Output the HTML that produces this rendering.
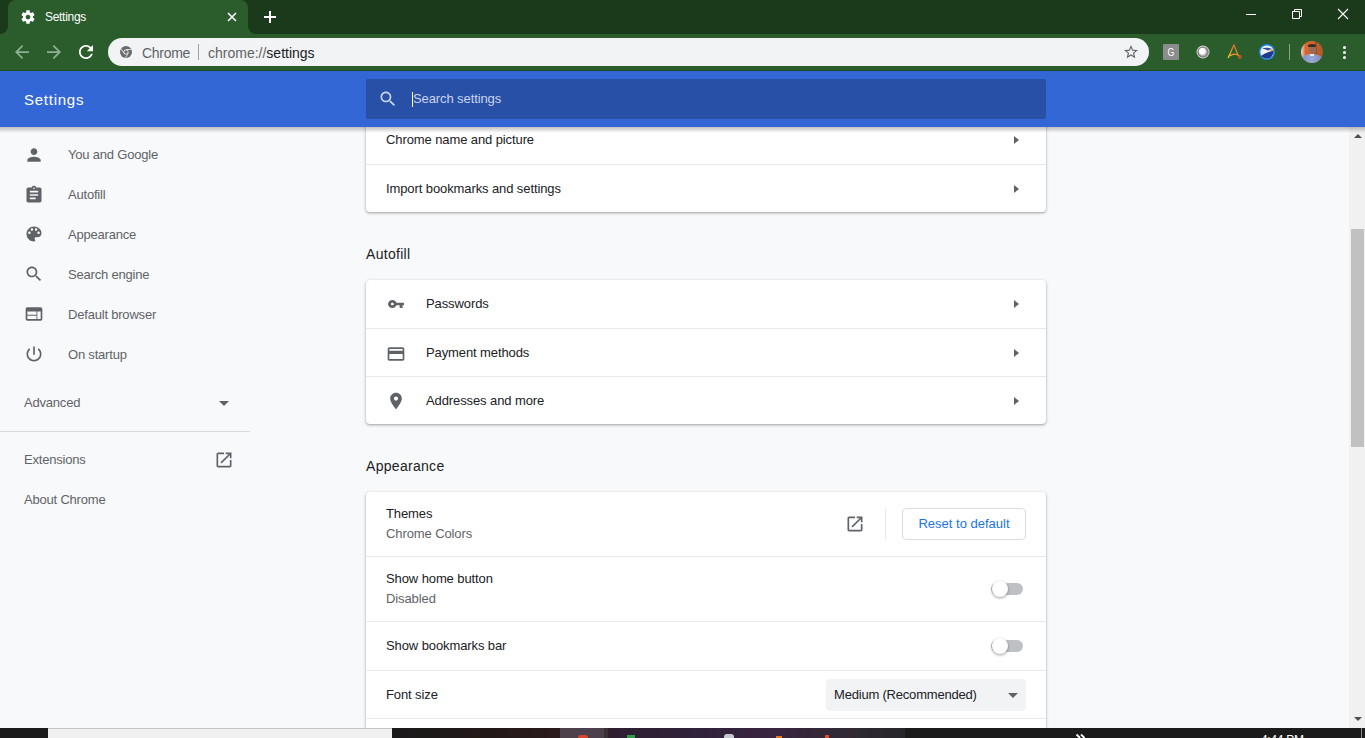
<!DOCTYPE html>
<html><head><meta charset="utf-8">
<style>
*{margin:0;padding:0;box-sizing:border-box}
html,body{width:1365px;height:738px;overflow:hidden;font-family:"Liberation Sans",sans-serif;background:#f8f9fa;position:relative}
.a{position:absolute}
svg{position:absolute;display:block}
.nav{position:absolute;left:68px;font-size:13px;letter-spacing:-0.2px;color:#5f6368;line-height:16px;white-space:nowrap;margin-top:1px}
.ico{fill:#5f6368}
.card{position:absolute;left:366px;width:680px;background:#fff;border-radius:4px;box-shadow:0 1px 2px 0 rgba(60,64,67,.3),0 1px 3px 1px rgba(60,64,67,.15)}
.sep{position:absolute;left:0;width:680px;height:1px;background:#e8eaed}
.lbl{position:absolute;font-size:13px;color:#202124;line-height:16px;white-space:nowrap;margin-top:1px;letter-spacing:-0.1px}
.sub{position:absolute;font-size:13px;color:#5f6368;line-height:16px;white-space:nowrap;margin-top:1px;letter-spacing:-0.1px}
.title{position:absolute;left:366px;font-size:14px;letter-spacing:0.3px;color:#202124;line-height:16px;margin-top:1px}
.arr{position:absolute;left:648px;width:0;height:0;border-top:4.5px solid transparent;border-bottom:4.5px solid transparent;border-left:5px solid #5f6368}
.toggle{position:absolute;left:625px;width:32px;height:12px}
.toggle .track{position:absolute;left:0;top:0;width:32px;height:12px;border-radius:6px;background:#bdc1c6}
.toggle .knob{position:absolute;left:0.5px;top:-2px;width:16px;height:16px;border-radius:50%;background:#fff;box-shadow:0 1px 3px 0 rgba(0,0,0,.4)}
</style></head><body>

<!-- ===== page content ===== -->
<div class="a" style="left:0;top:127px;width:1365px;height:601px;overflow:hidden">
 <div class="a" style="left:0;top:-127px;width:1365px;height:900px">
  <!-- sidebar -->
  <svg style="left:24px;top:145px" width="20" height="20" viewBox="0 0 24 24"><path class="ico" d="M12 12c2.21 0 4-1.79 4-4s-1.79-4-4-4-4 1.79-4 4 1.79 4 4 4zm0 2c-2.67 0-8 1.34-8 4v2h16v-2c0-2.66-5.33-4-8-4z"/></svg>
  <div class="nav" style="top:146px">You and Google</div>
  <svg style="left:24px;top:185px" width="20" height="20" viewBox="0 0 24 24"><path class="ico" d="M19 3h-4.18C14.4 1.84 13.3 1 12 1c-1.3 0-2.4.84-2.82 2H5c-1.1 0-2 .9-2 2v14c0 1.1.9 2 2 2h14c1.1 0 2-.9 2-2V5c0-1.1-.9-2-2-2zm-7 0c.55 0 1 .45 1 1s-.45 1-1 1-1-.45-1-1 .45-1 1-1zm2 14H7v-2h7v2zm3-4H7v-2h10v2zm0-4H7V7h10v2z"/></svg>
  <div class="nav" style="top:186px">Autofill</div>
  <svg style="left:24px;top:224px" width="20" height="20" viewBox="0 0 24 24"><path class="ico" d="M12 3c-4.97 0-9 4.03-9 9s4.030 9 9 9c.83 0 1.5-.67 1.5-1.5 0-.39-.15-.74-.39-1.01-.23-.26-.38-.61-.38-.99 0-.83.67-1.5 1.5-1.5H16c2.76 0 5-2.24 5-5 0-4.42-4.03-8-9-8zm-5.5 9c-.83 0-1.5-.67-1.5-1.5S5.670 9 6.5 9 8 9.67 8 10.5 7.33 12 6.5 12zm3-4C8.67 8 8 7.33 8 6.5S8.67 5 9.5 5s1.5.67 1.5 1.5S10.33 8 9.5 8zm5 0c-.83 0-1.5-.67-1.5-1.5S13.67 5 14.5 5s1.5.67 1.5 1.5S15.33 8 14.5 8zm3 4c-.83 0-1.5-.67-1.5-1.5S16.67 9 17.5 9s1.5.67 1.5 1.5-.67 1.5-1.5 1.5z"/></svg>
  <div class="nav" style="top:226px">Appearance</div>
  <svg style="left:24px;top:264px" width="20" height="20" viewBox="0 0 24 24"><path class="ico" d="M15.5 14h-.79l-.28-.27C15.41 12.59 16 11.11 16 9.5 16 5.91 13.09 3 9.5 3S3 5.91 3 9.5 5.91 16 9.5 16c1.61 0 3.090-.59 4.23-1.57l.27.28v.79l5 4.99L20.49 19l-4.99-5zm-6 0C7.01 14 5 11.99 5 9.5S7.01 5 9.5 5 14 7.01 14 9.5 11.99 14 9.5 14z"/></svg>
  <div class="nav" style="top:266px">Search engine</div>
  <svg style="left:24px;top:304px" width="20" height="20" viewBox="0 0 24 24"><path class="ico" d="M20 4H4c-1.1 0-1.99.9-1.99 2L2 18c0 1.1.9 2 2 2h16c1.1 0 2-.9 2-2V6c0-1.1-.9-2-2-2zm-5 14H4v-4h11v4zm0-5H4V9h11v4zm5 5h-4V9h4v9z"/></svg>
  <div class="nav" style="top:306px">Default browser</div>
  <svg style="left:24px;top:344px" width="20" height="20" viewBox="0 0 24 24"><path class="ico" d="M13 3h-2v10h2V3zm4.83 2.17l-1.42 1.42C17.99 7.86 19 9.81 19 12c0 3.87-3.13 7-7 7s-7-3.13-7-7c0-2.19 1.01-4.14 2.58-5.42L6.17 5.17C4.23 6.82 3 9.26 3 12c0 4.97 4.03 9 9 9s9-4.03 9-9c0-2.74-1.23-5.18-3.17-6.83z"/></svg>
  <div class="nav" style="top:346px">On startup</div>

  <div class="nav" style="left:24px;top:394px">Advanced</div>
  <div class="a" style="left:219px;top:400.5px;width:0;height:0;border-left:5px solid transparent;border-right:5px solid transparent;border-top:5px solid #5f6368"></div>
  <div class="a" style="left:0;top:431px;width:250px;height:1px;background:#dadce0"></div>
  <div class="nav" style="left:24px;top:451px">Extensions</div>
  <svg style="left:214px;top:450px" width="20" height="20" viewBox="0 0 24 24"><path class="ico" d="M19 19H5V5h7V3H5c-1.11 0-2 .9-2 2v14c0 1.1.89 2 2 2h14c1.1 0 2-.9 2-2v-7h-2v7zM14 3v2h3.59l-9.83 9.83 1.41 1.41L19 6.41V10h2V3h-7z"/></svg>
  <div class="nav" style="left:24px;top:491px">About Chrome</div>

  <!-- card 1 -->
  <div class="card" style="top:60px;height:152px">
   <div class="lbl" style="left:20px;top:71px">Chrome name and picture</div><div class="arr" style="top:75.5px"></div>
   <div class="sep" style="top:104px"></div>
   <div class="lbl" style="left:20px;top:120px">Import bookmarks and settings</div><div class="arr" style="top:124.5px"></div>
  </div>
  <div class="title" style="top:245px">Autofill</div>
  <!-- card 2 -->
  <div class="card" style="top:280px;height:144px">
   <svg style="left:22px;top:20px" width="16" height="8" viewBox="1 6 22 12" preserveAspectRatio="none"><path class="ico" d="M12.65 10C11.83 7.67 9.61 6 7 6c-3.31 0-6 2.69-6 6s2.69 6 6 6c2.61 0 4.83-1.67 5.65-4H17v4h4v-4h2v-4H12.65zM7 14c-1.1 0-2-.9-2-2s.9-2 2-2 2 .9 2 2-.9 2-2 2z"/></svg>
   <div class="lbl" style="left:60px;top:15px">Passwords</div><div class="arr" style="top:19.5px"></div>
   <div class="sep" style="top:48px"></div>
   <svg style="left:20px;top:64px" width="20" height="20" viewBox="0 0 24 24"><path class="ico" d="M20 4H4c-1.11 0-1.99.89-1.99 2L2 18c0 1.110.89 2 2 2h16c1.11 0 2-.89 2-2V6c0-1.11-.89-2-2-2zm0 14H4v-6h16v6zm0-10H4V6h16v2z"/></svg>
   <div class="lbl" style="left:60px;top:64px">Payment methods</div><div class="arr" style="top:68.5px"></div>
   <div class="sep" style="top:96px"></div>
   <svg style="left:20px;top:111px" width="20" height="20" viewBox="0 0 24 24"><path class="ico" d="M12 2C8.13 2 5 5.130 5 9c0 5.25 7 13 7 13s7-7.75 7-13c0-3.87-3.13-7-7-7zm0 9.5c-1.38 0-2.5-1.12-2.5-2.5s1.12-2.5 2.5-2.5 2.5 1.12 2.5 2.5-1.12 2.5-2.5 2.5z"/></svg>
   <div class="lbl" style="left:60px;top:112px">Addresses and more</div><div class="arr" style="top:116.5px"></div>
  </div>
  <div class="title" style="top:457px">Appearance</div>
  <!-- card 3 -->
  <div class="card" style="top:492px;height:300px">
   <div class="lbl" style="left:20px;top:13px">Themes</div>
   <div class="sub" style="left:20px;top:33px">Chrome Colors</div>
   <svg style="left:479px;top:22px" width="20" height="20" viewBox="0 0 24 24"><path class="ico" d="M19 19H5V5h7V3H5c-1.11 0-2 .9-2 2v14c0 1.1.89 2 2 2h14c1.1 0 2-.9 2-2v-7h-2v7zM14 3v2h3.59l-9.83 9.83 1.41 1.41L19 6.41V10h2V3h-7z"/></svg>
   <div class="a" style="left:519px;top:16px;width:1px;height:32px;background:#e8eaed"></div>
   <div class="a" style="left:536px;top:16px;width:124px;height:32px;border:1px solid #dadce0;border-radius:4px;color:#1a73e8;font-size:13px;line-height:30px;text-align:center">Reset to default</div>
   <div class="sep" style="top:64px"></div>
   <div class="lbl" style="left:20px;top:78px">Show home button</div>
   <div class="sub" style="left:20px;top:98px">Disabled</div>
   <div class="toggle" style="top:91px"><div class="track"></div><div class="knob"></div></div>
   <div class="sep" style="top:129px"></div>
   <div class="lbl" style="left:20px;top:145px">Show bookmarks bar</div>
   <div class="toggle" style="top:148px"><div class="track"></div><div class="knob"></div></div>
   <div class="sep" style="top:178px"></div>
   <div class="lbl" style="left:20px;top:194px">Font size</div>
   <div class="a" style="left:460px;top:187px;width:200px;height:32px;background:#f1f3f4;border-radius:4px"></div>
   <div class="lbl" style="left:468px;top:194px;letter-spacing:-0.2px">Medium (Recommended)</div>
   <div class="a" style="left:642px;top:201px;width:0;height:0;border-left:5px solid transparent;border-right:5px solid transparent;border-top:5px solid #5f6368"></div>
   <div class="sep" style="top:226px"></div>
  </div>
 </div>
</div>

<!-- ===== header ===== -->
<div class="a" style="left:0;top:71px;width:1365px;height:56px;background:#3367d6"></div>
<div class="a" style="left:0;top:127px;width:1365px;height:6px;background:linear-gradient(rgba(0,0,0,.24),rgba(0,0,0,0))"></div>
<div class="a" style="left:24px;top:91px;font-size:15px;letter-spacing:0.75px;color:#fff;line-height:18px">Settings</div>
<div class="a" style="left:366px;top:79px;width:680px;height:40px;background:#2850a7;border-radius:2px"></div>
<svg style="left:378px;top:89px" width="20" height="20" viewBox="0 0 24 24"><path fill="#c9d4ee" d="M15.5 14h-.79l-.28-.27C15.41 12.59 16 11.11 16 9.5 16 5.91 13.09 3 9.5 3S3 5.91 3 9.5 5.91 16 9.5 16c1.61 0 3.090-.59 4.23-1.57l.27.28v.79l5 4.99L20.49 19l-4.99-5zm-6 0C7.01 14 5 11.99 5 9.5S7.01 5 9.5 5 14 7.01 14 9.5 11.99 14 9.5 14z"/></svg>
<div class="a" style="left:413px;top:91px;font-size:13px;letter-spacing:-0.1px;color:#c9d4ee;line-height:16px">Search settings</div>
<div class="a" style="left:412px;top:92px;width:1px;height:15px;background:#fff"></div>

<!-- ===== browser chrome ===== -->
<div class="a" style="left:0;top:0;width:1365px;height:71px;background:#2a5c2c"></div>
<div class="a" style="left:0;top:0;width:1365px;height:20px;background:#1b3a1b"></div>
<div class="a" style="left:8px;top:0;width:240px;height:34px;background:#2a5c2c;border-radius:8px 8px 0 0"></div>
<div class="a" style="left:0;top:0;width:8px;height:34px;background:#1b3a1b;border-radius:0 0 8px 0"></div>
<div class="a" style="left:248px;top:0;width:1117px;height:34px;background:#1b3a1b;border-radius:0 0 0 8px"></div>
<div class="a" style="left:0;top:70px;width:1365px;height:1px;background:#1f4a22"></div>
<div class="a" style="left:108px;top:38px;width:1041px;height:28px;background:#f1f3f4;border-radius:14px"></div>


<!-- tab contents -->
<svg style="left:20px;top:9px" width="16" height="16" viewBox="0 0 24 24"><path fill="#fff" d="M19.43 12.98c.04-.32.07-.64.07-.98s-.03-.66-.07-.98l2.11-1.65c.19-.15.24-.42.12-.64l-2-3.46c-.12-.22-.39-.3-.61-.22l-2.49 1c-.52-.4-1.08-.73-1.690-.98l-.38-2.65C14.46 2.18 14.25 2 14 2h-4c-.25 0-.46.18-.49.42l-.38 2.65c-.61.25-1.17.59-1.69.98l-2.49-1c-.23-.09-.49 0-.61.22l-2 3.46c-.13.22-.07.49.12.64l2.11 1.65c-.04.32-.07.65-.07.98s.03.66.07.98l-2.11 1.65c-.19.15-.24.42-.12.64l2 3.46c.12.22.39.3.61.22l2.49-1c.52.4 1.08.73 1.69.98l.38 2.65c.03.24.24.42.49.42h4c.25 0 .46-.18.49-.42l.38-2.65c.61-.25 1.17-.59 1.69-.98l2.49 1c.23.09.49 0 .61-.22l2-3.46c.12-.22.07-.49-.12-.64l-2.11-1.65zM12 15.5c-1.93 0-3.5-1.57-3.5-3.5s1.57-3.5 3.5-3.5 3.5 1.57 3.5 3.5-1.57 3.5-3.5 3.5z"/></svg>
<div class="a" style="left:45px;top:10px;font-size:12px;letter-spacing:-0.3px;color:#fff;line-height:14px">Settings</div>
<svg style="left:226px;top:11px" width="12" height="12" viewBox="0 0 12 12"><path d="M2 2L10 10M10 2L2 10" stroke="#fff" stroke-width="1.6"/></svg>
<svg style="left:262px;top:9px" width="16" height="16" viewBox="0 0 16 16"><path d="M8 2V14M2 8H14" stroke="#fff" stroke-width="2"/></svg>
<!-- window controls -->
<div class="a" style="left:1246px;top:14px;width:10px;height:1px;background:#fff"></div>
<svg style="left:1291px;top:8px" width="12" height="12" viewBox="0 0 12 12"><path d="M1.5 3.5h7v7h-7z M3.5 3.5V1.5h7v7h-2" fill="none" stroke="#fff" stroke-width="1"/></svg>
<svg style="left:1337px;top:8px" width="12" height="12" viewBox="0 0 12 12"><path d="M1 1L11 11M11 1L1 11" stroke="#fff" stroke-width="1.1"/></svg>
<!-- nav buttons -->
<svg style="left:15px;top:45px" width="14" height="14" viewBox="4 4 16 16"><path fill="#8fae92" d="M20 11H7.83l5.59-5.59L12 4l-8 8 8 8 1.41-1.41L7.83 13H20v-2z"/></svg>
<svg style="left:47px;top:45px" width="14" height="14" viewBox="4 4 16 16"><path fill="#8fae92" d="M4 11h12.17l-5.59-5.59L12 4l8 8-8 8-1.41-1.41L16.17 13H4v-2z"/></svg>
<svg style="left:79px;top:45px" width="14" height="14" viewBox="4 4 16 16"><path fill="#fff" d="M17.65 6.35C16.2 4.9 14.21 4 12 4c-4.42 0-7.99 3.58-7.990 8s3.57 8 7.99 8c3.73 0 6.84-2.55 7.73-6h-2.08c-.82 2.33-3.04 4-5.65 4-3.31 0-6-2.69-6-6s2.69-6 6-6c1.66 0 3.14.69 4.22 1.78L13 11h7V4l-2.35 2.35z"/></svg>
<!-- omnibox contents -->
<svg style="left:120px;top:46px" width="12" height="12" viewBox="0 0 24 24"><circle cx="12" cy="12" r="12" fill="#6a6b6e"/><circle cx="12" cy="12" r="5" fill="#f1f3f4"/><circle cx="12" cy="12" r="3.6" fill="#6a6b6e"/><path d="M12 7H22.5M7.7 14.5L2.5 5.5M16.3 14.5L11 23.5" stroke="#f1f3f4" stroke-width="1.6"/></svg>
<div class="a" style="left:142px;top:45px;font-size:14px;letter-spacing:-0.3px;color:#5f6368;line-height:16px">Chrome</div>
<div class="a" style="left:198px;top:44px;width:1px;height:16px;background:#9aa0a6"></div>
<div class="a" style="left:208px;top:46px;font-size:14px;color:#5f6368;line-height:15px;letter-spacing:0px">chrome://<span style="color:#202124">settings</span></div>
<svg style="left:1124px;top:45px" width="14" height="13.5" viewBox="2 2 20 19.3"><path fill="#5f6368" d="M22 9.24l-7.19-.62L12 2 9.19 8.63 2 9.24l5.46 4.73L5.82 21 12 17.27 18.18 21l-1.63-7.03L22 9.24zM12 15.4l-3.76 2.27 1-4.28-3.32-2.88 4.38-.38L12 6.1l1.71 4.04 4.38.38-3.32 2.88 1 4.28L12 15.4z"/></svg>
<!-- extensions -->
<div class="a" style="left:1163px;top:44px;width:16px;height:16px;background:#8c8c8c;border-radius:1px"></div>
<div class="a" style="left:1163px;top:45px;width:16px;height:14px;font-size:11px;color:#fff;text-align:center;line-height:14px;transform:scaleX(0.8)">G</div>
<svg style="left:1196px;top:45px" width="14" height="14" viewBox="0 0 14 14"><circle cx="7" cy="7" r="6.5" fill="#d8d8d8"/><circle cx="7" cy="7" r="5.6" fill="#7a7a7a"/><circle cx="7" cy="7" r="4.4" fill="#b0b0b0"/><circle cx="6.3" cy="6.3" r="3.4" fill="#fff"/></svg>
<svg style="left:1227px;top:44px" width="15" height="15" viewBox="0 0 15 15"><defs><linearGradient id="ag" x1="0" y1="1" x2="1" y2="0"><stop offset="0" stop-color="#f5d020"/><stop offset="0.5" stop-color="#ef8a2a"/><stop offset="1" stop-color="#e05a2a"/></linearGradient></defs><path d="M1 14C3 10 5 5 7 1C8.5 5 10 9 12 13M2.5 12C6 9.5 10 10 12.5 12" fill="none" stroke="url(#ag)" stroke-width="1.2"/><circle cx="12.8" cy="12.8" r="1.3" fill="none" stroke="#e05a2a" stroke-width="1.1"/></svg>
<svg style="left:1259px;top:44px" width="16" height="16" viewBox="0 0 16 16"><circle cx="8" cy="8" r="8" fill="#1a8ae8"/><circle cx="8" cy="8" r="6.6" fill="#f2f2f2"/><path d="M2 12C5 9.5 9 8 14.6 6.5C14.8 10 12.5 14.6 8 14.6C5.5 14.6 3.2 13.5 2 12z" fill="#1e3a8c"/><path d="M3 4.5C6 3.5 10 3.5 13 5L9 6.5C7 5.5 5 5 3 4.5z" fill="#2a4aa0"/><path d="M10 5.2L15 5.6L12.2 7.6z" fill="#f0a030"/></svg>
<div class="a" style="left:1289px;top:44px;width:1px;height:16px;background:rgba(255,255,255,.45)"></div>
<div class="a" style="left:1301px;top:41px;width:22px;height:22px;border-radius:50%;overflow:hidden;background:linear-gradient(90deg,#e8d0d8 0,#e0b0a8 8%,#d8682a 20%,#d0652c 62%,#7a4a2a 68%,#c0602c 74%,#a85a2a 100%)">
 <div class="a" style="left:7.5px;top:4px;width:7px;height:9px;border-radius:45%;background:#9a6a58"></div>
 <div class="a" style="left:7px;top:2.5px;width:8px;height:3.5px;border-radius:50% 50% 20% 20%;background:#3a2a2a"></div>
 <div class="a" style="left:0px;top:13px;width:22px;height:12px;border-radius:50% 50% 0 0;background:linear-gradient(90deg,#8090c0,#98a8d8 50%,#7a88b8)"></div>
 <div class="a" style="left:9px;top:12.5px;width:4px;height:2px;background:#e8e8f0"></div>
</div>
<div class="a" style="left:1343px;top:46px;width:3px;height:3px;border-radius:50%;background:#fff"></div>
<div class="a" style="left:1343px;top:51px;width:3px;height:3px;border-radius:50%;background:#fff"></div>
<div class="a" style="left:1343px;top:56px;width:3px;height:3px;border-radius:50%;background:#fff"></div>

<!-- scrollbar -->
<div class="a" style="left:1349px;top:127px;width:16px;height:601px;background:#f1f1f1"></div>
<div class="a" style="left:1351px;top:229px;width:13px;height:218px;background:#c1c1c1"></div>
<div class="a" style="left:1353.5px;top:133.5px;width:0;height:0;border-left:4px solid transparent;border-right:4px solid transparent;border-bottom:4.5px solid #505050"></div>
<div class="a" style="left:1353.5px;top:716.5px;width:0;height:0;border-left:4px solid transparent;border-right:4px solid transparent;border-top:4.5px solid #505050"></div>
<div class="a" style="left:1349px;top:127px;width:16px;height:6px;background:linear-gradient(rgba(0,0,0,.24),rgba(0,0,0,0))"></div>
<!-- taskbar -->
<div class="a" style="left:0;top:728px;width:1365px;height:10px;background:#1b1b1b"></div>
<div class="a" style="left:48px;top:728px;width:344px;height:10px;background:#f0f0f0;border-top:1px solid #c4c4c4"></div>
<div class="a" style="left:392px;top:728px;width:168px;height:10px;background:linear-gradient(90deg,#1a1a1a,#231818 60%,#2a1a1c)"></div>
<div class="a" style="left:560px;top:728px;width:44px;height:10px;background:#4c404c"></div>
<div class="a" style="left:578px;top:735px;width:10px;height:3px;border-radius:5px 5px 0 0;background:#d9452f"></div>
<div class="a" style="left:604px;top:728px;width:4px;height:10px;background:#3a3038"></div>
<div class="a" style="left:608px;top:728px;width:297px;height:10px;background:linear-gradient(90deg,#2e1e30,#30223a 30%,#3a2440 55%,#302a34 80%,#26262a)"></div>
<div class="a" style="left:627px;top:735px;width:8px;height:3px;background:#2f9a48"></div>
<div class="a" style="left:724px;top:734px;width:10px;height:4px;border-radius:3px 3px 0 0;background:#c8c8d0"></div>
<div class="a" style="left:776px;top:736px;width:6px;height:2px;background:#e07a20"></div>
<div class="a" style="left:825px;top:735px;width:4px;height:3px;background:#e0502a"></div>
<svg style="left:1074px;top:733px" width="14" height="6" viewBox="0 0 14 6"><path d="M2.5 1.5L6 5M7 1.5L10.5 5" stroke="#fff" stroke-width="1.8"/></svg>
<div class="a" style="left:1261px;top:733px;font-size:12px;letter-spacing:-0.3px;line-height:14px;color:#fff">4:44 PM</div>
<div class="a" style="left:1361px;top:728px;width:1px;height:10px;background:#8a8a8a"></div>
</body></html>
